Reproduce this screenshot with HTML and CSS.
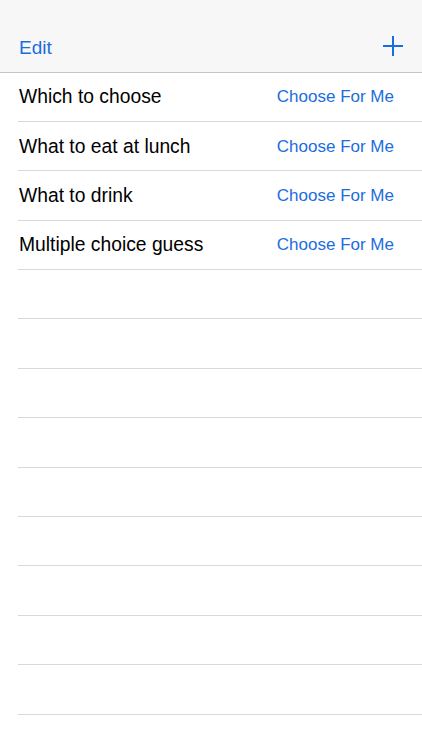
FILE: index.html
```html
<!DOCTYPE html>
<html>
<head>
<meta charset="utf-8">
<link rel="stylesheet" href="styles.css">
</head>
<body>
<div class="navbar">
  <span class="nav-btn">Edit</span>
  <svg class="plus" width="22" height="22" viewBox="0 0 22 22"><path d="M11 1v20M1 11h20" stroke="#1a6de0" stroke-width="2" fill="none"/></svg>
</div>
<div class="list">
  <div class="row"><span class="title">Which to choose</span><span class="action">Choose For Me</span></div>
  <div class="row"><span class="title">What to eat at lunch</span><span class="action">Choose For Me</span></div>
  <div class="row"><span class="title">What to drink</span><span class="action">Choose For Me</span></div>
  <div class="row"><span class="title">Multiple choice guess</span><span class="action">Choose For Me</span></div>
  <div class="row"></div>
  <div class="row"></div>
  <div class="row"></div>
  <div class="row"></div>
  <div class="row"></div>
  <div class="row"></div>
  <div class="row"></div>
  <div class="row"></div>
  <div class="row"></div>
  <div class="row"></div>
</div>
</body>
</html>
```
FILE: styles.css
```css
html, body {
  margin: 0;
  padding: 0;
  background: #ffffff;
  font-family: "Liberation Sans", Arial, sans-serif;
  overflow: hidden;
  height: 750px;
}
.navbar {
  box-sizing: border-box;
  height: 72.5px;
  background: #f7f7f7;
  border-bottom: 1px solid #c4c4c7;
  display: flex;
  align-items: flex-end;
  justify-content: space-between;
  padding: 0 18px 13px 19px;
}
.nav-btn {
  color: #1a6de0;
  font-size: 19px;
  line-height: 22px;
}
.plus {
  display: block;
  margin-bottom: 2px;
}
.list {
  padding-left: 18px;
}
.row {
  box-sizing: border-box;
  height: 49.4px;
  border-bottom: 1px solid #d9d9dc;
  display: flex;
  align-items: center;
  justify-content: space-between;
  padding: 1px 28px 0 1px;
}
.title {
  font-size: 19.3px;
  color: #000000;
}
.action {
  font-size: 17px;
  color: #1a6de0;
}
```
